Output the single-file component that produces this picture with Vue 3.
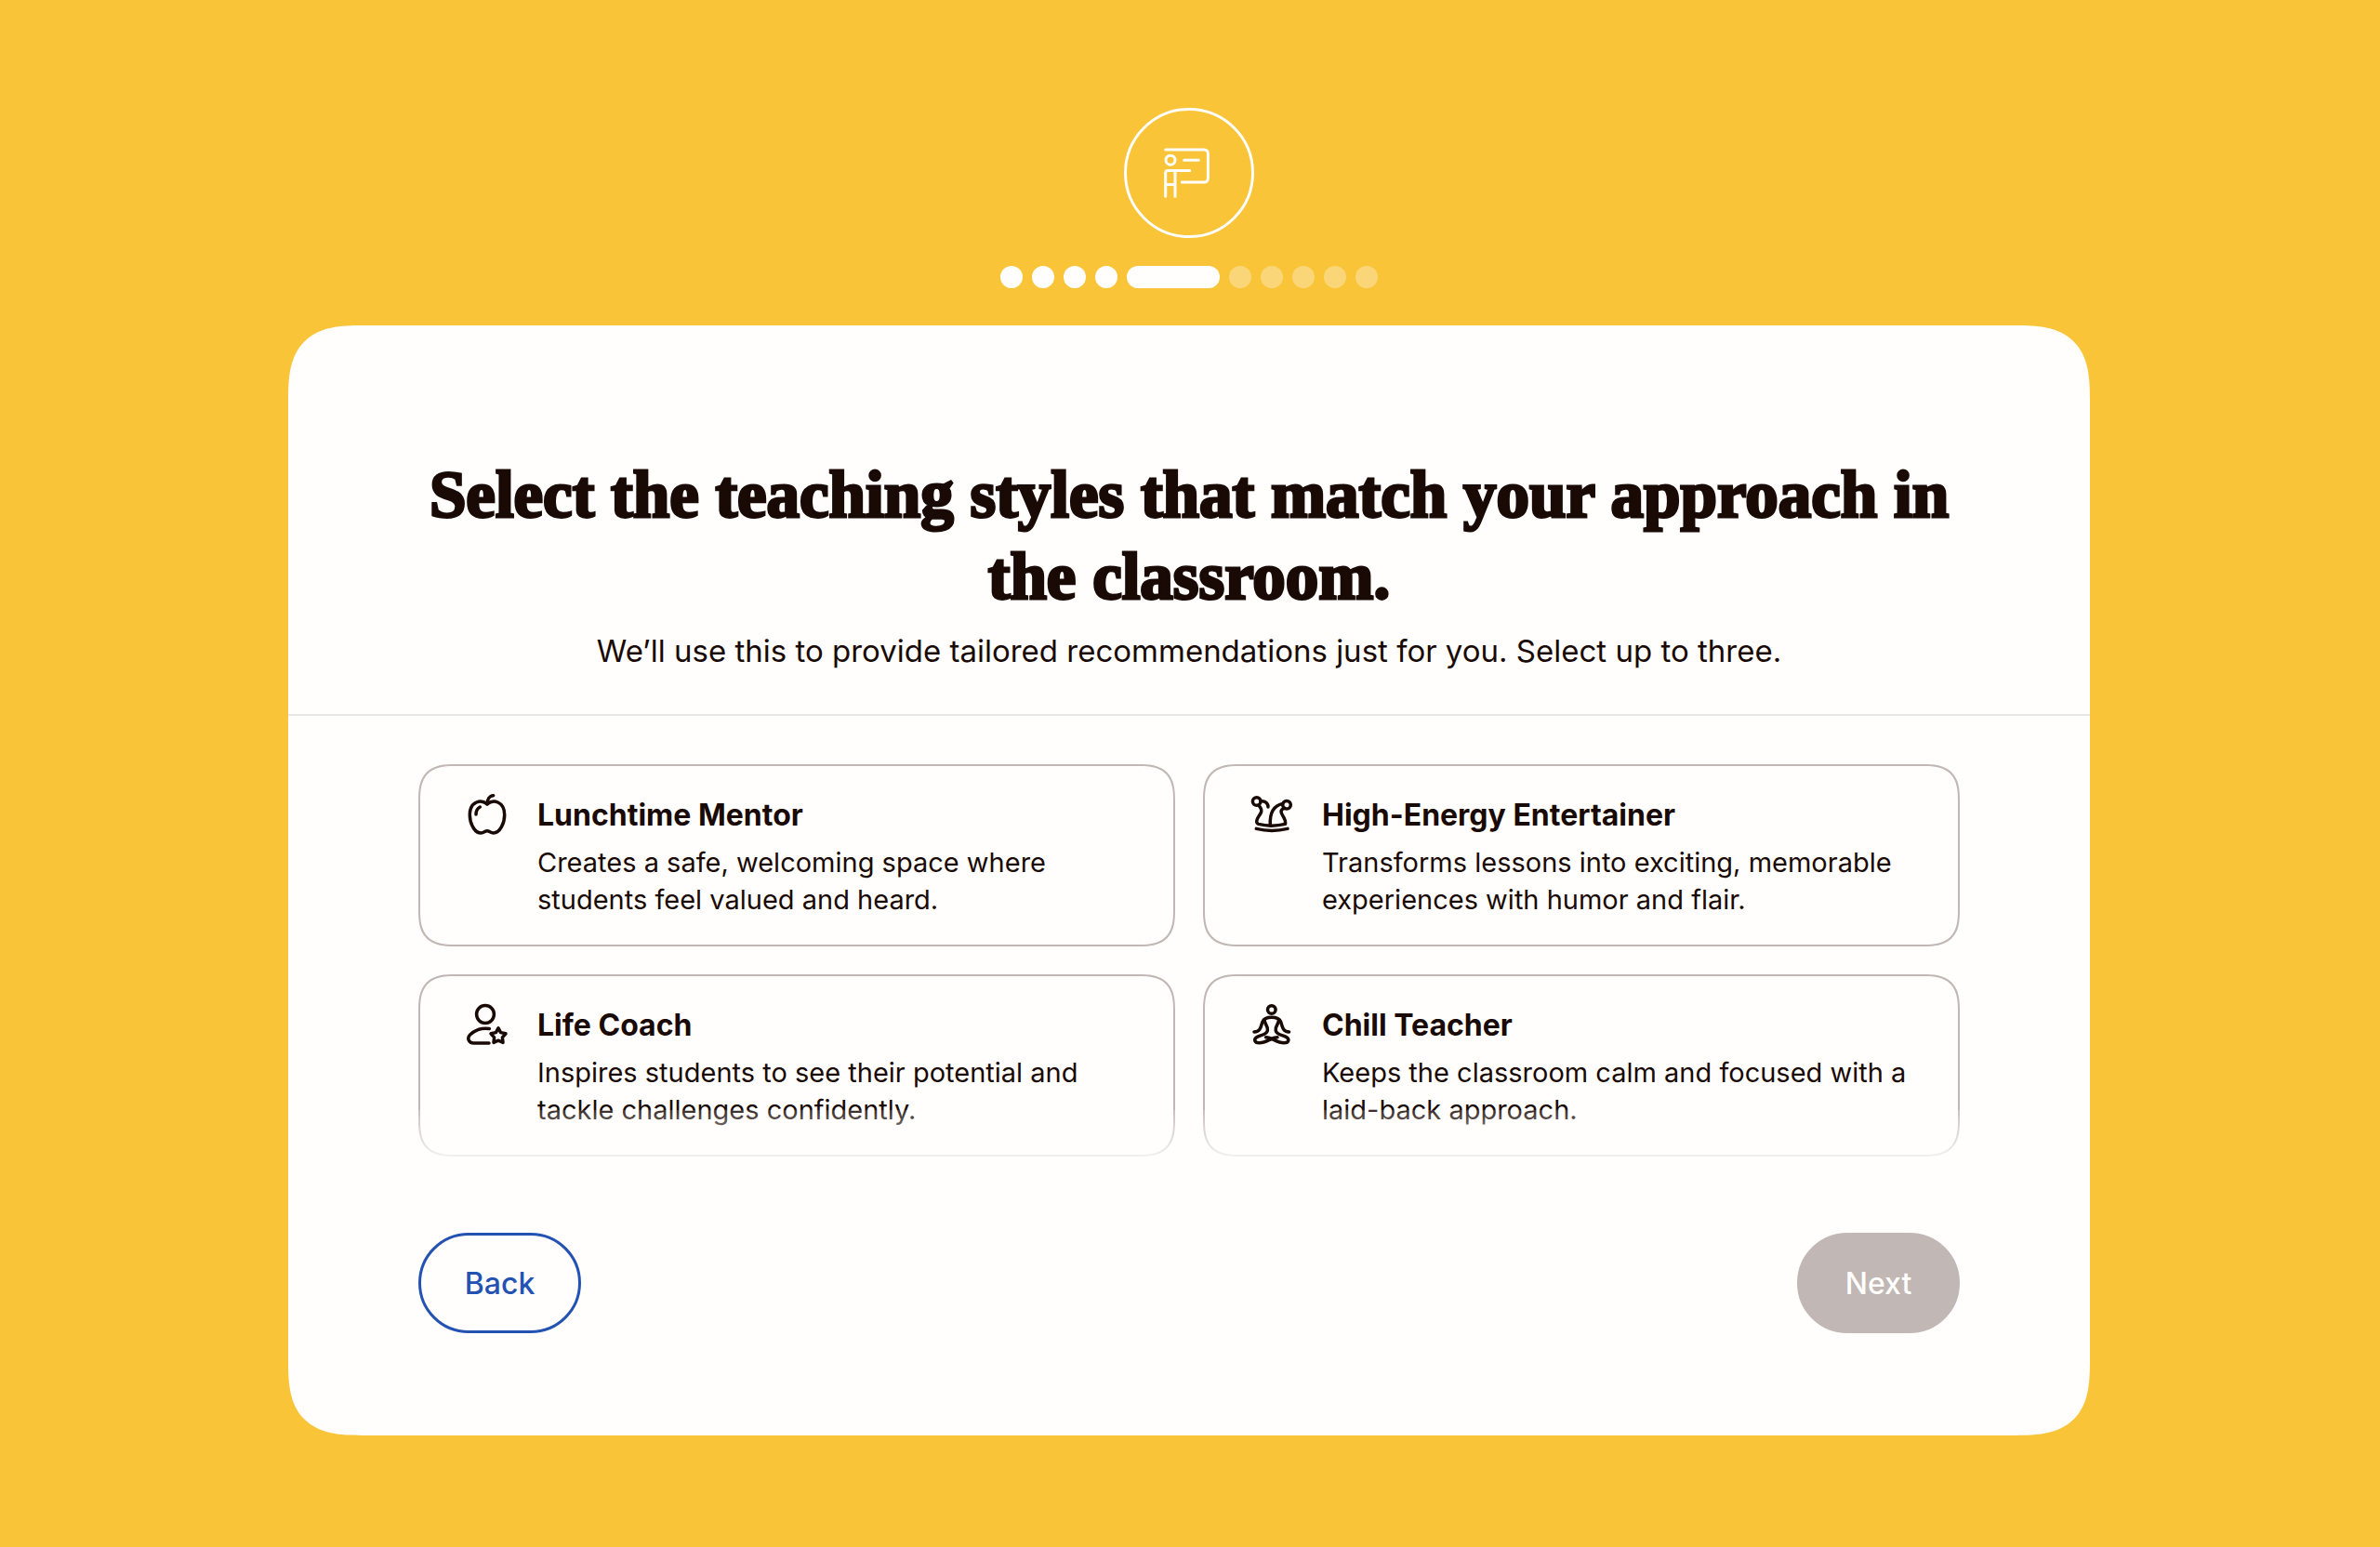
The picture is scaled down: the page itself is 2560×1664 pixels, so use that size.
<script setup>
import { ref } from 'vue'

const STEP_COUNT = 10
const currentStep = 5
const MAX_SELECTED = 3

const styles = [
  {
    id: 'mentor',
    title: 'Lunchtime Mentor',
    text: 'Creates a safe, welcoming space where students feel valued and heard.',
    paths: [
      'M24 13C20.5 10 16 9.5 12.5 11C8 13 5.3 18 5.3 24.5C5.3 33 10 44 17.3 44C20.5 44 21.5 41.8 24 41.8C26.5 41.8 27.5 44 30.7 44C38 44 42.7 33 42.7 24.5C42.7 18 40 13 35.5 11C32 9.5 27.5 10 24 13Z',
      'M24 13C24 8 26.5 4 30.7 3.7',
      'M12 24C12 20.5 13.5 17.5 16.3 16'
    ],
    circles: []
  },
  {
    id: 'entertainer',
    title: 'High-Energy Entertainer',
    text: 'Transforms lessons into exciting, memorable experiences with humor and flair.',
    paths: [
      'M12 10C16.5 9.2 20 12 20 16',
      'M9.6 14C11.5 16 13.4 18 12.7 21C11.8 25 7.7 27.5 7.7 31.3C7.7 33 8.3 34 9.6 34.4C18 36.6 29 36.6 38.6 34.4C39.4 27.5 34 25 34 21C34 19 35.5 18 37.8 17.4',
      'M22.3 36C21.5 23 26 14.5 35.7 12.4',
      'M7.3 39.4C18 42 30 42 41 39.4'
    ],
    circles: [[7.7, 10, 4.3], [40, 13.7, 4.3]]
  },
  {
    id: 'coach',
    title: 'Life Coach',
    text: 'Inspires students to see their potential and tackle challenges confidently.',
    paths: [
      'M26.3 28.5C17.5 27.2 11 30 5.8 34.8C1.8 38.6 4.2 44 9.6 44H26',
      'M36 27.8L38.6 32.6L44 33.8L40.4 37.8L41 43.4L36 41.2L31 43.4L31.6 37.8L28 33.8L33.4 32.6Z'
    ],
    circles: [[22, 13, 9.4]]
  },
  {
    id: 'chill',
    title: 'Chill Teacher',
    text: 'Keeps the classroom calm and focused with a laid-back approach.',
    paths: [
      'M5 32C12.5 31.5 12.3 25.5 14 21C15.4 17.4 18.5 16.2 23.8 16.2C29.1 16.2 32.2 17.4 33.6 21C35.3 25.5 35.1 31.5 42.6 32',
      'M16.3 19.4C15.8 23.5 20.4 25.5 19.4 30.5C18.4 35.5 12 35 8 37.5C4.4 39.7 5 43.8 10.5 43.8C19 43.8 22.5 38 30 37.8',
      'M31.3 19.4C31.8 23.5 27.2 25.5 28.2 30.5C29.2 35.5 35.6 35 39.6 37.5C43.2 39.7 42.6 43.8 37.1 43.8C28.6 43.8 25.1 38 17.6 37.8'
    ],
    circles: [[23.8, 8, 4.3]]
  }
]

const selected = ref([])

function toggle(id) {
  if (selected.value.includes(id)) {
    selected.value = selected.value.filter((s) => s !== id)
  } else if (selected.value.length < MAX_SELECTED) {
    selected.value = [...selected.value, id]
  }
}
</script>

<template>
  <main class="page">
    <div class="badge">
      <svg class="badge-icon" viewBox="0 0 56 56" aria-hidden="true">
        <path d="M2.7 3H43.8Q48.4 3 48.4 7.6V33.4Q48.4 38 43.8 38H20.4" />
        <circle cx="8" cy="14.2" r="5" />
        <path d="M22.7 14.2H38.3" />
        <path d="M28.7 25.4H5.4Q2.7 25.4 2.7 28.2V53.3M13 25.4V53.3M2.7 40.4H13" />
      </svg>
    </div>

    <ol class="steps" aria-label="Progress">
      <li
        v-for="n in STEP_COUNT"
        :key="n"
        class="step"
        :class="{ current: n === currentStep, upcoming: n > currentStep }"
      ></li>
    </ol>

    <section class="panel">
      <header class="intro">
        <h1 class="heading">Select the teaching styles that match your approach in the classroom.</h1>
        <p class="subheading">We’ll use this to provide tailored recommendations just for you. Select up to three.</p>
      </header>

      <div class="options">
        <button
          v-for="style in styles"
          :key="style.id"
          type="button"
          class="option"
          :class="{ selected: selected.includes(style.id) }"
          :aria-pressed="selected.includes(style.id)"
          @click="toggle(style.id)"
        >
          <svg class="option-icon" viewBox="0 0 48 48" stroke-width="3.5" aria-hidden="true">
            <path v-for="d in style.paths" :key="d" :d="d" />
            <circle v-for="c in style.circles" :key="c[0]" :cx="c[0]" :cy="c[1]" :r="c[2]" />
          </svg>
          <span class="option-body">
            <span class="option-title">{{ style.title }}</span>
            <span class="option-text">{{ style.text }}</span>
          </span>
        </button>
        <div class="fade"></div>
      </div>

      <footer class="actions">
        <button type="button" class="action back">Back</button>
        <button type="button" class="action next" :disabled="selected.length === 0">Next</button>
      </footer>
    </section>
  </main>
</template>

<style>
body {
  margin: 0;
  background: #f9c438;
}
</style>

<style scoped>
.page {
  box-sizing: border-box;
  min-height: 100vh;
  padding: 116px 312px 120px 310px;
  display: flex;
  flex-direction: column;
  align-items: center;
  background: #f9c438;
  color: #190a05;
  font-family: Inter, "Liberation Sans", sans-serif;
}

.badge {
  box-sizing: border-box;
  width: 140px;
  height: 140px;
  border: 3px solid #fffefd;
  border-radius: 50%;
  display: flex;
  align-items: center;
  justify-content: center;
}

.badge-icon {
  width: 56px;
  height: 56px;
  fill: none;
  stroke: #fffefd;
  stroke-width: 3;
  stroke-linecap: round;
  stroke-linejoin: round;
}

.steps {
  list-style: none;
  margin: 30px 0 40px;
  padding: 0;
  display: flex;
  gap: 10px;
}

.step {
  width: 24px;
  height: 24px;
  border-radius: 12px;
  background: #fffefd;
}

.step.current {
  width: 100px;
}

.step.upcoming {
  background: #fbd678;
}

.panel {
  box-sizing: border-box;
  width: 100%;
  padding-bottom: 110px;
  background: #fffefd;
  border-radius: 60px;
}

.intro {
  padding: 138px 140px 44px;
  border-bottom: 2px solid #e8e7e6;
  text-align: center;
}

.heading {
  margin: 0 0 12px;
  font-family: "Liberation Serif", serif;
  font-size: 71px;
  line-height: 88px;
  font-weight: 700;
  -webkit-text-stroke: 3px #190a05;
}

.subheading {
  margin: 0;
  font-size: 33px;
  line-height: 48px;
}

.options {
  position: relative;
  display: grid;
  grid-template-columns: 1fr 1fr;
  gap: 30px;
  margin: 52px 140px 82px;
}

.option {
  display: flex;
  align-items: flex-start;
  gap: 30px;
  padding: 28px 48px;
  border: 2px solid #c1b7b4;
  border-radius: 32px;
  background: transparent;
  color: inherit;
  font-family: inherit;
  text-align: left;
  cursor: pointer;
}

.option.selected {
  border-color: #2452b2;
}

.option-icon {
  flex: none;
  width: 48px;
  height: 48px;
  fill: none;
  stroke: currentColor;
  stroke-linecap: round;
  stroke-linejoin: round;
}

.option-body {
  display: flex;
  flex-direction: column;
  gap: 6px;
}

.option-title {
  font-size: 32px;
  line-height: 50px;
  font-weight: 700;
}

.option-text {
  font-size: 29px;
  line-height: 40px;
}

.fade {
  position: absolute;
  left: 0;
  right: 0;
  bottom: 0;
  height: 50px;
  background: linear-gradient(to bottom, #fffefd26, #fffefdcc);
  pointer-events: none;
}

.actions {
  display: flex;
  justify-content: space-between;
  padding: 0 140px;
}

.action {
  box-sizing: border-box;
  height: 108px;
  min-width: 175px;
  padding: 2px 46px 0;
  border: 3px solid #2452b2;
  border-radius: 54px;
  background: transparent;
  color: #2452b2;
  font-family: inherit;
  font-size: 32px;
  font-weight: 500;
  line-height: 48px;
  cursor: pointer;
}

.action.next:disabled {
  border-color: #c1b7b4;
  background: #c1b7b4;
  color: #fffefd;
  cursor: default;
}

@supports (corner-shape: squircle) {
  .panel {
    border-radius: 80px;
    corner-shape: superellipse(1.5);
  }

  .option {
    border-radius: 40px;
    corner-shape: superellipse(1.5);
  }
}
</style>
